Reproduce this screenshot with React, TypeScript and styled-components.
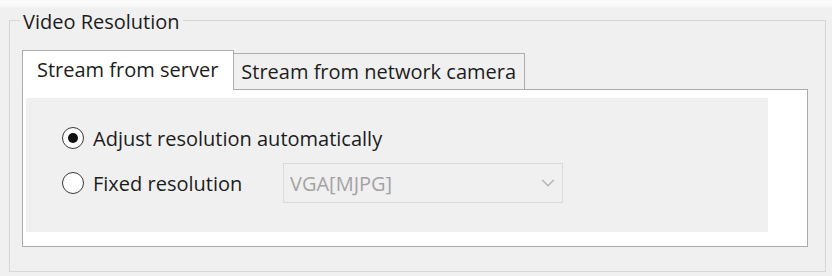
import styled, { createGlobalStyle } from "styled-components";
import { ChevronDown } from "lucide-react";

const GlobalStyle = createGlobalStyle`
  html, body {
    margin: 0;
    padding: 0;
    background: #f0f0f0;
  }
  body {
    font-family: "Open Sans", "Noto Sans", sans-serif;
    font-size: 20px;
    color: #1c1c1c;
  }
`;

const Page = styled.div`
  width: 832px;
  height: 276px;
  box-sizing: border-box;
  padding: 8px 6px 0 9px;
  background: linear-gradient(#fafafa 0 6px, #f0f0f0 8px);
`;

const GroupBox = styled.fieldset`
  margin: 0;
  min-width: 0;
  padding: 0 17px 24px 12px;
  border: 1px solid #d6d6d6;
`;

const Legend = styled.legend`
  margin-left: -2px;
  padding: 4px 3px 0;
  line-height: 20px;
`;

const TabStrip = styled.div`
  display: flex;
  align-items: flex-end;
  margin-top: 18px;
  height: 39px;
`;

const Tab = styled.div<{ $active?: boolean }>`
  position: relative;
  z-index: ${(p) => (p.$active ? 2 : 1)};
  box-sizing: border-box;
  display: flex;
  align-items: center;
  height: ${(p) => (p.$active ? 40 : 36)}px;
  margin-bottom: ${(p) => (p.$active ? -1 : 0)}px;
  padding: ${(p) => (p.$active ? "0 15px 2px 14px" : "0 8px 0 7px")};
  background: ${(p) => (p.$active ? "#fff" : "#f0f0f0")};
  border: 1px solid #adadad;
  border-bottom: none;
  border-left-width: ${(p) => (p.$active ? 1 : 0)}px;
  white-space: nowrap;
`;

const Panel = styled.div`
  border: 1px solid #acacac;
  background: #fff;
  padding: 8px 39px 14px 3px;
`;

const Page2 = styled.div`
  height: 134px;
  box-sizing: border-box;
  background: #f0f0f0;
  padding: 29px 0 0 36px;
  display: flex;
  flex-direction: column;
  gap: 14px;
`;

const Row = styled.div<{ $height: number }>`
  display: flex;
  align-items: center;
  height: ${(p) => p.$height}px;
`;

const RadioLabel = styled.label<{ $width?: number }>`
  display: flex;
  align-items: center;
  gap: 9px;
  width: ${(p) => (p.$width ? `${p.$width}px` : "auto")};
  white-space: nowrap;
`;

const RadioCircle = styled.span<{ $checked?: boolean }>`
  box-sizing: border-box;
  width: 22px;
  height: 22px;
  border-radius: 50%;
  border: 1.5px solid #3a3a3a;
  background: #fff;
  display: flex;
  align-items: center;
  justify-content: center;

  &::after {
    content: "";
    width: 10px;
    height: 10px;
    border-radius: 50%;
    background: #111;
    display: ${(p) => (p.$checked ? "block" : "none")};
  }
`;

const Combo = styled.div`
  box-sizing: border-box;
  width: 280px;
  height: 40px;
  border: 1px solid #dadada;
  background: #f0f0f0;
  display: flex;
  align-items: center;
  justify-content: space-between;
  padding: 0 3px 0 6px;
  color: #a3a3a3;
`;

export default function App() {
  return (
    <>
      <GlobalStyle />
      <Page>
        <GroupBox>
          <Legend>Video Resolution</Legend>
          <TabStrip>
            <Tab $active>Stream from server</Tab>
            <Tab>Stream from network camera</Tab>
          </TabStrip>
          <Panel>
            <Page2>
              <Row $height={22}>
                <RadioLabel>
                  <RadioCircle $checked />
                  Adjust resolution automatically
                </RadioLabel>
              </Row>
              <Row $height={40}>
                <RadioLabel $width={221}>
                  <RadioCircle />
                  Fixed resolution
                </RadioLabel>
                <Combo>
                  VGA[MJPG]
                  <ChevronDown size={22} strokeWidth={1.6} color="#b5b5b5" />
                </Combo>
              </Row>
            </Page2>
          </Panel>
        </GroupBox>
      </Page>
    </>
  );
}
